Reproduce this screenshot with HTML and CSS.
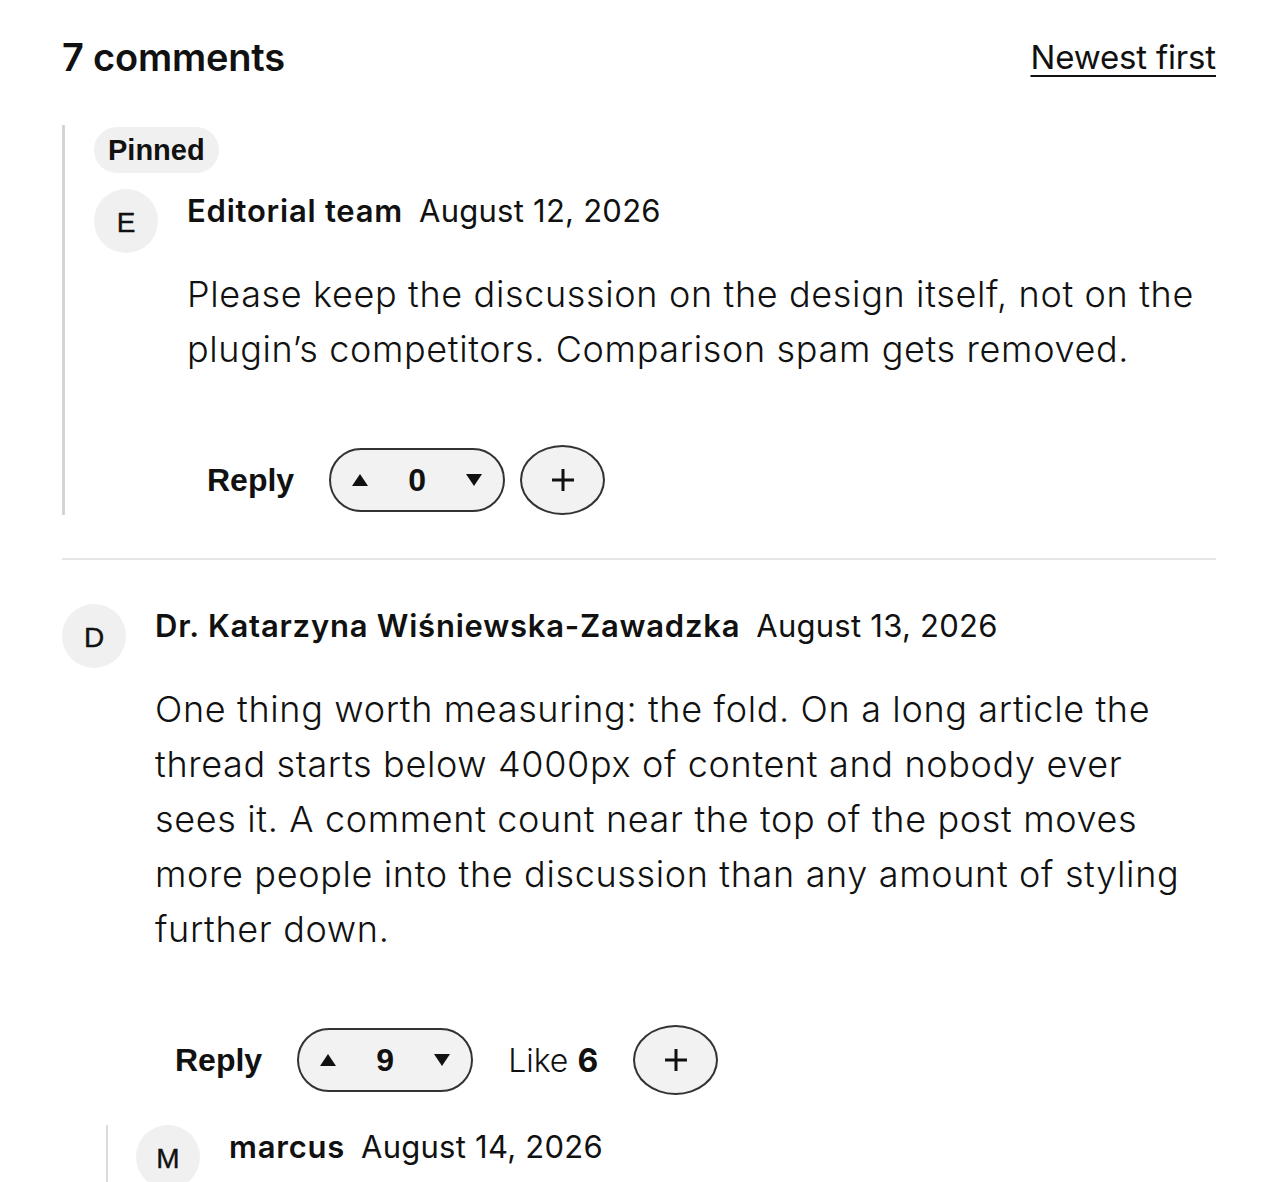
FILE: index.html
```html
<!DOCTYPE html>
<html>
	<head>
		<meta charset="UTF-8">
		<title>Comments</title>
		<link rel="stylesheet" href="styles.css">
	</head>
	<body>
		<div class="thread">
			<div class="thread-head">
				<h2>7 comments</h2>
				<a href="#" class="sort">Newest first</a>
			</div>

			<div class="pinned">
				<span class="badge">Pinned</span>
				<div class="comment">
					<div class="avatar">E</div>
					<div class="comment-main">
						<div class="meta"><span class="author">Editorial team</span><span class="date">August 12, 2026</span></div>
						<p class="text">Please keep the discussion on the design itself, not on the plugin’s competitors. Comparison spam gets removed.</p>
						<div class="actions">
							<button class="reply">Reply</button>
							<div class="vote">
								<button class="arrow"><svg width="18" height="14" viewBox="0 0 18 14"><polygon points="9,1 17,13 1,13" fill="#111"/></svg></button>
								<span class="count">0</span>
								<button class="arrow"><svg width="18" height="14" viewBox="0 0 18 14"><polygon points="1,1 17,1 9,13" fill="#111"/></svg></button>
							</div>
							<button class="more"><svg width="22" height="22" viewBox="0 0 22 22"><path d="M11 0v22M0 11h22" stroke="#111" stroke-width="3"/></svg></button>
						</div>
					</div>
				</div>
			</div>

			<hr class="sep">

			<div class="comment">
				<div class="avatar">D</div>
				<div class="comment-main">
					<div class="meta"><span class="author">Dr. Katarzyna Wiśniewska-Zawadzka</span><span class="date">August 13, 2026</span></div>
					<p class="text">One thing worth measuring: the fold. On a long article the thread starts below 4000px of content and nobody ever sees it. A comment count near the top of the post moves more people into the discussion than any amount of styling further down.</p>
					<div class="actions">
						<button class="reply">Reply</button>
						<div class="vote">
							<button class="arrow"><svg width="18" height="14" viewBox="0 0 18 14"><polygon points="9,1 17,13 1,13" fill="#111"/></svg></button>
							<span class="count">9</span>
							<button class="arrow"><svg width="18" height="14" viewBox="0 0 18 14"><polygon points="1,1 17,1 9,13" fill="#111"/></svg></button>
						</div>
						<button class="like">Like <b>6</b></button>
						<button class="more"><svg width="22" height="22" viewBox="0 0 22 22"><path d="M11 0v22M0 11h22" stroke="#111" stroke-width="3"/></svg></button>
					</div>
				</div>
			</div>

			<div class="replies">
				<div class="comment">
					<div class="avatar">M</div>
					<div class="comment-main">
						<div class="meta"><span class="author">marcus</span><span class="date">August 14, 2026</span></div>
					</div>
				</div>
			</div>
		</div>
	</body>
</html>
```

FILE: styles.css
```css
*{margin: 0;padding: 0;box-sizing: border-box;}
body{font-family: Inter, "Noto Sans", sans-serif;color: #111;background: #fff;}
.thread{padding: 33px 64px 0 62px;}

.thread-head{display: flex;justify-content: space-between;align-items: center;height: 48px;}
.thread-head h2{font-size: 38px;font-weight: 600;letter-spacing: -0.005em;line-height: 48px;}
.sort{font-size: 33px;font-weight: 400;color: #111;letter-spacing: -0.005em;text-underline-offset: 6px;text-decoration-thickness: 2px;}

.pinned{margin-top: 44px;border-left: 3px solid #d4d4d4;padding: 2px 0 0 29px;}
.badge{display: inline-block;height: 46px;line-height: 46px;padding: 0 14px;border-radius: 23px;background: #f0f0f0;font-family: "Liberation Sans", Arial, sans-serif;font-size: 29px;font-weight: 600;margin-bottom: 16px;}

.comment{display: flex;gap: 29px;}
.avatar{flex-shrink: 0;width: 64px;height: 64px;border-radius: 50%;background: #f0f0f0;display: flex;align-items: center;justify-content: center;padding-top: 3px;font-family: "Liberation Sans", Arial, sans-serif;font-size: 28px;-webkit-text-stroke: 0.4px #111;}
.comment-main{flex: 1;padding-right: 18px;}
.meta{display: flex;gap: 16px;align-items: baseline;line-height: 44px;}
.author{font-size: 31px;font-weight: 600;letter-spacing: 0.025em;}
.date{font-size: 31px;font-weight: 400;letter-spacing: 0.008em;}
.text{margin-top: 34px;font-size: 36px;line-height: 55px;font-weight: 300;letter-spacing: 0.018em;}

.actions{display: flex;align-items: center;gap: 15px;margin-top: 68px;}
.actions button{font: inherit;color: #111;background: none;border: none;cursor: pointer;}
.reply{padding: 0 20px;font-family: "Liberation Sans", Arial, sans-serif !important;font-size: 32px !important;font-weight: 700 !important;}
.vote{display: flex;align-items: center;gap: 38px;height: 64px;padding: 0 20px;border: 2px solid #333;border-radius: 32px;background: #f2f2f2;}
.arrow{display: flex;width: 18px;}
.count{min-width: 20px;text-align: center;font-family: "Liberation Sans", Arial, sans-serif;font-size: 32px;font-weight: 600;}
.like{padding: 0 20px;font-size: 32px !important;font-weight: 300 !important;}
.like b{font-weight: 700;}
.actions .more{display: flex;align-items: center;justify-content: center;width: 85px;height: 70px;border: 2px solid #333;border-radius: 50%;background: #f2f2f2;}

.sep{border: none;border-top: 2px solid #e6e6e6;margin: 43px 0 44px;}

.replies{margin: 30px 0 0 44px;border-left: 2px solid #dcdcdc;padding-left: 28px;}
```
